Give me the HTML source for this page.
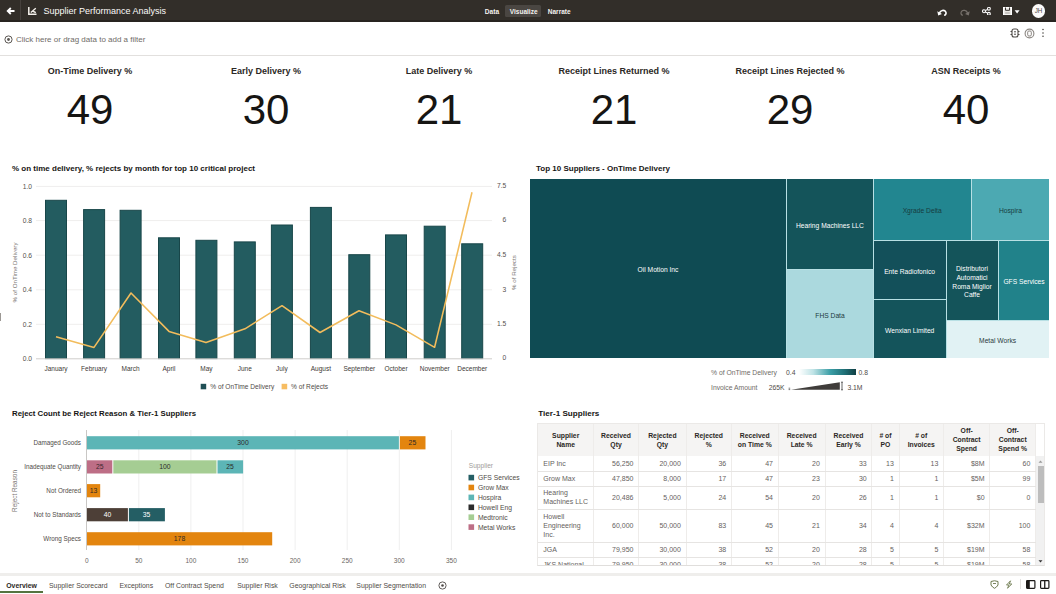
<!DOCTYPE html>
<html><head><meta charset="utf-8">
<style>
*{margin:0;padding:0;box-sizing:border-box}
html,body{width:1056px;height:594px;overflow:hidden;background:#fff;font-family:"Liberation Sans",sans-serif;color:#161513}
.a{position:absolute;white-space:nowrap}
#hdr{position:absolute;left:0;top:0;width:1056px;height:22px;background:#322e29;border-bottom:2px solid #282420}
.kt{position:absolute;top:66px;width:176px;text-align:center;font-size:9px;font-weight:bold;color:#2b2825}
.kv{position:absolute;top:88px;width:176px;text-align:center;font-size:42px;color:#161513;line-height:44px}
.ct{position:absolute;font-size:8px;font-weight:bold;color:#161513}
svg{position:absolute;left:0;top:0}
.tab{position:absolute;font-size:6.9px;color:#4f4b47;line-height:9px}
.tl{width:80px;text-align:center;font-size:6.7px;line-height:10px}
.lg{font-size:6.8px;color:#6f6b67;line-height:10px}
.th{text-align:center;font-size:6.8px;font-weight:bold;color:#2b2825}
.td{font-size:7px;color:#66625e}
</style></head>
<body>
<!-- header -->
<div id="hdr"></div>
<div class="a" style="left:6px;top:5px;width:9px;height:12px">
<svg width="9" height="12" viewBox="0 0 9 12"><path d="M8.5 6H2.2M4.8 3L1.7 6L4.8 9" stroke="#fff" stroke-width="1.8" fill="none"/></svg></div>
<div class="a" style="left:19.5px;top:0;width:1.5px;height:20px;background:#46413d"></div>
<div class="a" style="left:28px;top:7px;width:10px;height:8px">
<svg width="10" height="8" viewBox="0 0 10 8"><path d="M0.8 0V7.2H8.5" stroke="#f4f1ec" stroke-width="1.5" fill="none"/><path d="M2.8 5.5L7.8 1.2M4.6 4L7.8 5.6" stroke="#f4f1ec" stroke-width="1.4" fill="none"/></svg></div>
<div class="a" style="left:43.5px;top:5px;font-size:9px;color:#fcfbfa;line-height:12px">Supplier Performance Analysis</div>
<div class="a" style="left:505.2px;top:4.5px;width:36px;height:12.5px;background:#4a4642;border-radius:1.5px"></div>
<div class="a" style="left:484.8px;top:6.6px;font-size:6.6px;font-weight:bold;color:#f4f2ef;line-height:10px">Data</div>
<div class="a" style="left:509.8px;top:6.6px;font-size:6.5px;font-weight:bold;color:#f4f2ef;line-height:10px">Visualize</div>
<div class="a" style="left:547.8px;top:6.6px;font-size:6.5px;font-weight:bold;color:#f4f2ef;line-height:10px">Narrate</div>
<!-- header right icons -->
<svg style="left:936.5px;top:7.5px" width="10" height="8" viewBox="0 0 10 8"><path d="M2.5 5.2C3 2.2 7.5 1.2 8.8 4C9.5 5.6 8.6 7 7.2 7.4" stroke="#fff" stroke-width="1.6" fill="none"/><path d="M0.3 3.2L1.2 7.6L5 6Z" fill="#fff"/></svg>
<svg style="left:959.5px;top:7.5px" width="10" height="8" viewBox="0 0 10 8"><path d="M7.5 5.2C7 2.2 2.5 1.2 1.2 4C0.5 5.6 1.4 7 2.8 7.4" stroke="#77716c" stroke-width="1.2" fill="none"/><path d="M9.7 3.2L8.8 7.6L5 6Z" fill="#77716c"/></svg>
<svg style="left:981.5px;top:6.8px" width="9" height="8.5" viewBox="0 0 9 8.5"><circle cx="2" cy="4.25" r="1.5" stroke="#fff" stroke-width="1.1" fill="none"/><circle cx="6.9" cy="1.7" r="1.4" stroke="#fff" stroke-width="1.1" fill="none"/><circle cx="6.9" cy="6.8" r="1.4" stroke="#fff" stroke-width="1.1" fill="none"/><path d="M3.3 3.5L5.6 2.4M3.3 5L5.6 6.1" stroke="#fff" stroke-width="1.1"/></svg>
<svg style="left:1002.5px;top:6.8px" width="18" height="8.5" viewBox="0 0 18 8.5"><rect x="0.5" y="0.5" width="8" height="7.5" fill="#eceae6"/><rect x="0.5" y="0.5" width="8" height="7.5" stroke="#fff" stroke-width="1" fill="none"/><path d="M2.5 0.5V3.3H6.5V0.5" stroke="#3a3633" stroke-width="1" fill="none"/><rect x="2.2" y="5" width="4.6" height="2" fill="#c9c6c2"/><path d="M11.6 3.2H16.6L14.1 6.4Z" fill="#fff"/></svg>
<div class="a" style="left:1031.6px;top:3.9px;width:13.8px;height:13.8px;border-radius:50%;background:#fcfbfa;font-size:6.3px;color:#4f4b47;text-align:center;line-height:13.8px">JH</div>
<!-- filter bar -->
<svg style="left:4px;top:35px" width="9" height="9" viewBox="0 0 9 9"><circle cx="4.5" cy="4.5" r="3.6" stroke="#5a5652" stroke-width="1" fill="none"/><circle cx="4.5" cy="4.5" r="1.4" fill="#5a5652"/></svg>
<div class="a" style="left:16px;top:34.5px;font-size:8px;color:#6f6b67;line-height:10px">Click here or drag data to add a filter</div>
<svg style="left:1010px;top:28px" width="10" height="10" viewBox="0 0 10 10"><rect x="2" y="1" width="6" height="8" rx="2" stroke="#4f4b47" stroke-width="1.1" fill="none"/><path d="M0.5 3.5H2M0.5 6.5H2M8 3.5H9.5M8 6.5H9.5M4 3.8H6M4 6.2H6" stroke="#4f4b47" stroke-width="1"/></svg>
<svg style="left:1024px;top:28px" width="11" height="11" viewBox="0 0 11 11"><circle cx="5.5" cy="5.5" r="4.4" stroke="#8a8580" stroke-width="1.1" fill="none"/><rect x="3.7" y="3" width="3.6" height="5" rx="1.2" stroke="#8a8580" stroke-width="1" fill="none"/></svg>
<svg style="left:1041px;top:28px" width="4" height="10" viewBox="0 0 4 10"><circle cx="2" cy="1.5" r="0.8" fill="#4f4b47"/><circle cx="2" cy="5" r="0.8" fill="#4f4b47"/><circle cx="2" cy="8.3" r="0.8" fill="#4f4b47"/></svg>
<div class="a" style="left:0;top:54.6px;width:1056px;height:1.3px;background:#e2e0de"></div>

<!-- KPIs -->
<div class="kt" style="left:2px">On-Time Delivery %</div>
<div class="kt" style="left:178px">Early Delivery %</div>
<div class="kt" style="left:351px">Late Delivery %</div>
<div class="kt" style="left:526px">Receipt Lines Returned %</div>
<div class="kt" style="left:702px">Receipt Lines Rejected %</div>
<div class="kt" style="left:878px">ASN Receipts %</div>
<div class="kv" style="left:2px">49</div>
<div class="kv" style="left:178px">30</div>
<div class="kv" style="left:351px">21</div>
<div class="kv" style="left:526px">21</div>
<div class="kv" style="left:702px">29</div>
<div class="kv" style="left:878px">40</div>

<!-- CHART1 -->
<svg style="left:0;top:150px" width="528" height="250" viewBox="0 150 528 250">
<line x1="36" y1="186.4" x2="492" y2="186.4" stroke="#efeeed" stroke-width="1"/>
<line x1="36" y1="220.6" x2="492" y2="220.6" stroke="#efeeed" stroke-width="1"/>
<line x1="36" y1="255.2" x2="492" y2="255.2" stroke="#efeeed" stroke-width="1"/>
<line x1="36" y1="289.8" x2="492" y2="289.8" stroke="#efeeed" stroke-width="1"/>
<line x1="36" y1="324.3" x2="492" y2="324.3" stroke="#efeeed" stroke-width="1"/>
<rect x="45.5" y="200.3" width="21" height="158.3" fill="#235c60" stroke="#184649" stroke-width="1"/>
<rect x="83.6" y="209.6" width="21" height="149.0" fill="#235c60" stroke="#184649" stroke-width="1"/>
<rect x="120.1" y="210.3" width="21" height="148.3" fill="#235c60" stroke="#184649" stroke-width="1"/>
<rect x="158.5" y="237.8" width="21" height="120.8" fill="#235c60" stroke="#184649" stroke-width="1"/>
<rect x="195.9" y="240.3" width="21" height="118.3" fill="#235c60" stroke="#184649" stroke-width="1"/>
<rect x="234.3" y="241.9" width="21" height="116.7" fill="#235c60" stroke="#184649" stroke-width="1"/>
<rect x="271.4" y="225.0" width="21" height="133.6" fill="#235c60" stroke="#184649" stroke-width="1"/>
<rect x="310.4" y="207.4" width="21" height="151.2" fill="#235c60" stroke="#184649" stroke-width="1"/>
<rect x="348.8" y="254.7" width="21" height="103.9" fill="#235c60" stroke="#184649" stroke-width="1"/>
<rect x="385.5" y="234.9" width="21" height="123.7" fill="#235c60" stroke="#184649" stroke-width="1"/>
<rect x="424.2" y="226.2" width="21" height="132.4" fill="#235c60" stroke="#184649" stroke-width="1"/>
<rect x="461.7" y="243.8" width="21" height="114.8" fill="#235c60" stroke="#184649" stroke-width="1"/>
<line x1="36" y1="358.8" x2="492" y2="358.8" stroke="#cfcdcb" stroke-width="1"/>
<polyline points="56,336.8 94,347.4 131,293 169,331.4 206,342.6 245,328.8 282,305.7 320,332.5 359,310.8 396,324.9 434.6,347.3 472,192.2" fill="none" stroke="#f2bc5c" stroke-width="1.55" stroke-linejoin="round"/>
<text x="32" y="188.7" text-anchor="end" font-size="6.7" fill="#55514d">1.0</text>
<text x="32" y="222.9" text-anchor="end" font-size="6.7" fill="#55514d">0.8</text>
<text x="32" y="257.5" text-anchor="end" font-size="6.7" fill="#55514d">0.6</text>
<text x="32" y="292.1" text-anchor="end" font-size="6.7" fill="#55514d">0.4</text>
<text x="32" y="326.6" text-anchor="end" font-size="6.7" fill="#55514d">0.2</text>
<text x="32" y="360.9" text-anchor="end" font-size="6.7" fill="#55514d">0.0</text>
<text x="506.3" y="188.1" text-anchor="end" font-size="6.7" fill="#55514d">7.5</text>
<text x="506.3" y="222.3" text-anchor="end" font-size="6.7" fill="#55514d">6</text>
<text x="506.3" y="256.9" text-anchor="end" font-size="6.7" fill="#55514d">4.5</text>
<text x="506.3" y="291.5" text-anchor="end" font-size="6.7" fill="#55514d">3</text>
<text x="506.3" y="326.0" text-anchor="end" font-size="6.7" fill="#55514d">1.5</text>
<text x="506.3" y="360.3" text-anchor="end" font-size="6.7" fill="#55514d">0</text>
<text x="56.0" y="371" text-anchor="middle" font-size="6.5" fill="#3d3935">January</text>
<text x="94.1" y="371" text-anchor="middle" font-size="6.5" fill="#3d3935">February</text>
<text x="130.6" y="371" text-anchor="middle" font-size="6.5" fill="#3d3935">March</text>
<text x="169.0" y="371" text-anchor="middle" font-size="6.5" fill="#3d3935">April</text>
<text x="206.4" y="371" text-anchor="middle" font-size="6.5" fill="#3d3935">May</text>
<text x="244.8" y="371" text-anchor="middle" font-size="6.5" fill="#3d3935">June</text>
<text x="281.9" y="371" text-anchor="middle" font-size="6.5" fill="#3d3935">July</text>
<text x="320.9" y="371" text-anchor="middle" font-size="6.5" fill="#3d3935">August</text>
<text x="359.3" y="371" text-anchor="middle" font-size="6.5" fill="#3d3935">September</text>
<text x="396.0" y="371" text-anchor="middle" font-size="6.5" fill="#3d3935">October</text>
<text x="434.7" y="371" text-anchor="middle" font-size="6.5" fill="#3d3935">November</text>
<text x="472.2" y="371" text-anchor="middle" font-size="6.5" fill="#3d3935">December</text>
<text transform="translate(17.3,272.5) rotate(-90)" text-anchor="middle" font-size="6.2" fill="#7a7571">% of OnTime Delivery</text>
<text transform="translate(515.5,272.6) rotate(-90)" text-anchor="middle" font-size="6.2" fill="#7a7571">% of Rejects</text>
<rect x="200.7" y="383.8" width="5.5" height="5.5" fill="#1f4f55"/>
<text x="210.3" y="389" font-size="6.6" fill="#4f4b47">% of OnTime Delivery</text>
<rect x="281.6" y="383.8" width="5.6" height="5.5" fill="#f7bd62"/>
<text x="291.1" y="389" font-size="6.6" fill="#4f4b47">% of Rejects</text>
</svg>
<div class="ct" style="left:12px;top:163.5px;line-height:10px">% on time delivery, % rejects by month for top 10 critical project</div>
<div class="a" style="left:0;top:312.5px;width:1.3px;height:8.5px;background:#9c9894"></div>
<!-- TREEMAP -->
<div class="a" style="left:530px;top:179px;width:519px;height:179px;background:#b8e0e4"></div>
<div class="a" style="left:530px;top:179px;width:256.0px;height:179.0px;background:#0f4b53"></div>
<div class="a tl" style="left:618.0px;top:264.9px;color:#ffffff">Oil Motion Inc</div>
<div class="a" style="left:787px;top:179px;width:86.0px;height:90.0px;background:#14545a"></div>
<div class="a tl" style="left:789.9px;top:220.5px;color:#ffffff">Hearing Machines LLC</div>
<div class="a" style="left:787px;top:270px;width:86.0px;height:88.0px;background:#abd9de"></div>
<div class="a tl" style="left:790.0px;top:310.5px;color:#1d3b3e">FHS Data</div>
<div class="a" style="left:874px;top:179px;width:97.0px;height:61.0px;background:#228690"></div>
<div class="a tl" style="left:882.2px;top:206.0px;color:#173c40">Xgrade Delta</div>
<div class="a" style="left:972px;top:179px;width:77.0px;height:61.0px;background:#4ca9b2"></div>
<div class="a tl" style="left:970.5px;top:206.0px;color:#173c40">Hospira</div>
<div class="a" style="left:874px;top:241px;width:72.0px;height:58.0px;background:#13505a"></div>
<div class="a tl" style="left:869.6px;top:266.7px;color:#ffffff">Ente Radiofonico</div>
<div class="a" style="left:874px;top:300px;width:72.0px;height:58.0px;background:#14545b"></div>
<div class="a tl" style="left:869.7px;top:325.6px;color:#ffffff">Wenxian Limited</div>
<div class="a" style="left:947px;top:241px;width:51.0px;height:79.0px;background:#14545a"></div>
<div class="a tl" style="left:932.0px;top:264.0px;color:#ffffff">Distributori</div>
<div class="a tl" style="left:932.0px;top:272.8px;color:#ffffff">Automatici</div>
<div class="a tl" style="left:932.0px;top:281.6px;color:#ffffff">Roma Miglior</div>
<div class="a tl" style="left:932.0px;top:290.3px;color:#ffffff">Caffe</div>
<div class="a" style="left:999px;top:241px;width:50.0px;height:79.0px;background:#21828a"></div>
<div class="a tl" style="left:984.0px;top:276.7px;color:#ffffff">GFS Services</div>
<div class="a" style="left:947px;top:321px;width:102.0px;height:37.0px;background:#e1f2f4"></div>
<div class="a tl" style="left:957.6px;top:336.4px;color:#2b3a3c">Metal Works</div>
<div class="ct" style="left:536px;top:163.6px;line-height:10px">Top 10 Suppliers - OnTime Delivery</div>
<div class="a lg" style="left:711px;top:367.5px">% of OnTime Delivery</div>
<div class="a lg" style="left:786px;top:367.5px;color:#4f4b47">0.4</div>
<div class="a" style="left:799px;top:369.4px;width:56.5px;height:5.2px;background:linear-gradient(90deg,#ffffff 0%,#bfe3e6 25%,#3b9ea6 55%,#1f6f76 80%,#103f44 100%)"></div>
<div class="a lg" style="left:858.5px;top:367.5px;color:#4f4b47">0.8</div>
<div class="a lg" style="left:711px;top:382.5px">Invoice Amount</div>
<div class="a lg" style="left:768.7px;top:382.5px;color:#4f4b47">265K</div>
<svg style="left:786px;top:380px" width="60" height="12" viewBox="0 0 60 12"><path d="M2.6 8.2H4.2M2.6 9.6H4.2" stroke="#555" stroke-width="0.8"/><path d="M5 9.8L53.8 2.2V9.8Z" fill="#3f3c3a"/><path d="M56 2.2V9.8M55 2.2H57M55 9.8H57" stroke="#555" stroke-width="0.9"/></svg>
<div class="a lg" style="left:847.4px;top:382.5px;color:#4f4b47">3.1M</div>
<!-- BARCHART -->
<svg style="left:0;top:420px" width="528" height="155" viewBox="0 420 528 155">
<line x1="138.8" y1="430" x2="138.8" y2="550" stroke="#efefef" stroke-width="1"/>
<line x1="190.9" y1="430" x2="190.9" y2="550" stroke="#efefef" stroke-width="1"/>
<line x1="243.0" y1="430" x2="243.0" y2="550" stroke="#efefef" stroke-width="1"/>
<line x1="295.1" y1="430" x2="295.1" y2="550" stroke="#efefef" stroke-width="1"/>
<line x1="347.2" y1="430" x2="347.2" y2="550" stroke="#efefef" stroke-width="1"/>
<line x1="399.3" y1="430" x2="399.3" y2="550" stroke="#efefef" stroke-width="1"/>
<line x1="451.4" y1="430" x2="451.4" y2="550" stroke="#efefef" stroke-width="1"/>
<rect x="86.9" y="436.2" width="312.0" height="13.2" fill="#5cb5b6"/>
<text x="243.0" y="445.2" text-anchor="middle" font-size="6.8" fill="#2d2a27">300</text>
<rect x="399.9" y="436.2" width="25.6" height="13.2" fill="#e3850f"/>
<text x="412.4" y="445.2" text-anchor="middle" font-size="6.8" fill="#2d2a27">25</text>
<text x="81" y="444.9" text-anchor="end" font-size="6.3" fill="#4f4b47">Damaged Goods</text>
<rect x="86.9" y="460.3" width="25.4" height="13.2" fill="#bd6e86"/>
<text x="99.7" y="469.3" text-anchor="middle" font-size="6.8" fill="#3b2730">25</text>
<rect x="113.3" y="460.3" width="103.2" height="13.2" fill="#a5cd93"/>
<text x="164.9" y="469.3" text-anchor="middle" font-size="6.8" fill="#2d2a27">100</text>
<rect x="217.5" y="460.3" width="25.6" height="13.2" fill="#5cb5b6"/>
<text x="230.0" y="469.3" text-anchor="middle" font-size="6.8" fill="#2d2a27">25</text>
<text x="81" y="469.0" text-anchor="end" font-size="6.3" fill="#4f4b47">Inadequate Quantity</text>
<rect x="86.9" y="484.1" width="13.3" height="13.2" fill="#e3850f"/>
<text x="93.5" y="493.1" text-anchor="middle" font-size="6.8" fill="#2d2a27">13</text>
<text x="81" y="492.8" text-anchor="end" font-size="6.3" fill="#4f4b47">Not Ordered</text>
<rect x="86.9" y="508.1" width="41.0" height="13.2" fill="#4d3f37"/>
<text x="107.5" y="517.1" text-anchor="middle" font-size="6.8" fill="#ffffff">40</text>
<rect x="128.9" y="508.1" width="36.0" height="13.2" fill="#245e64"/>
<text x="146.6" y="517.1" text-anchor="middle" font-size="6.8" fill="#ffffff">35</text>
<text x="81" y="516.8" text-anchor="end" font-size="6.3" fill="#4f4b47">Not to Standards</text>
<rect x="86.9" y="532.2" width="185.3" height="13.2" fill="#e3850f"/>
<text x="179.5" y="541.2" text-anchor="middle" font-size="6.8" fill="#2d2a27">178</text>
<text x="81" y="540.9" text-anchor="end" font-size="6.3" fill="#4f4b47">Wrong Specs</text>
<line x1="86.5" y1="430" x2="86.5" y2="550" stroke="#c9c7c5" stroke-width="1"/>
<text x="86.7" y="563" text-anchor="middle" font-size="6.5" fill="#6a6662">0</text>
<text x="138.8" y="563" text-anchor="middle" font-size="6.5" fill="#6a6662">50</text>
<text x="190.9" y="563" text-anchor="middle" font-size="6.5" fill="#6a6662">100</text>
<text x="243.0" y="563" text-anchor="middle" font-size="6.5" fill="#6a6662">150</text>
<text x="295.1" y="563" text-anchor="middle" font-size="6.5" fill="#6a6662">200</text>
<text x="347.2" y="563" text-anchor="middle" font-size="6.5" fill="#6a6662">250</text>
<text x="399.3" y="563" text-anchor="middle" font-size="6.5" fill="#6a6662">300</text>
<text x="451.4" y="563" text-anchor="middle" font-size="6.5" fill="#6a6662">350</text>
<text transform="translate(16.5,491) rotate(-90)" text-anchor="middle" font-size="6.4" fill="#7a7571">Reject Reason</text>
<text x="468.8" y="467.5" font-size="6.6" fill="#a09c98">Supplier</text>
<rect x="468.5" y="474.8" width="5.6" height="5.6" fill="#245e64"/>
<text x="477.9" y="480.1" font-size="6.75" fill="#4f4b47">GFS Services</text>
<rect x="468.5" y="484.7" width="5.6" height="5.6" fill="#e3850f"/>
<text x="477.9" y="490.0" font-size="6.75" fill="#4f4b47">Grow Max</text>
<rect x="468.5" y="494.6" width="5.6" height="5.6" fill="#5cb5b6"/>
<text x="477.9" y="499.9" font-size="6.75" fill="#4f4b47">Hospira</text>
<rect x="468.5" y="504.5" width="5.6" height="5.6" fill="#2b2b2b"/>
<text x="477.9" y="509.8" font-size="6.75" fill="#4f4b47">Howell Eng</text>
<rect x="468.5" y="514.4" width="5.6" height="5.6" fill="#a5cd93"/>
<text x="477.9" y="519.7" font-size="6.75" fill="#4f4b47">Medtronic</text>
<rect x="468.5" y="524.3" width="5.6" height="5.6" fill="#bd6e86"/>
<text x="477.9" y="529.6" font-size="6.75" fill="#4f4b47">Metal Works</text>
</svg>
<div class="ct" style="left:12px;top:408.8px;line-height:10px;font-size:7.8px">Reject Count be Reject Reason &amp; Tier-1 Suppliers</div>
<!-- TABLE -->
<div class="ct" style="left:538.3px;top:409px;line-height:10px;font-size:8.1px">Tier-1 Suppliers</div>
<div class="a" style="left:537px;top:422.5px;width:508px;height:143px;overflow:hidden;border:1px solid #ebe9e7;border-bottom:1px solid #e0dedc">
<div class="a" style="left:0;top:0;width:497.6px;height:32.5px;background:#f5f4f3"></div>
<div class="a th" style="left:0.0px;top:8.4px;width:55.4px;line-height:8.9px">Supplier<br>Name</div>
<div class="a th" style="left:55.4px;top:8.4px;width:45.3px;line-height:8.9px">Received<br>Qty</div>
<div class="a th" style="left:100.7px;top:8.4px;width:47.4px;line-height:8.9px">Rejected<br>Qty</div>
<div class="a th" style="left:148.1px;top:8.4px;width:45.3px;line-height:8.9px">Rejected<br>%</div>
<div class="a th" style="left:193.4px;top:8.4px;width:46.8px;line-height:8.9px">Received<br>on Time %</div>
<div class="a th" style="left:240.2px;top:8.4px;width:46.9px;line-height:8.9px">Received<br>Late %</div>
<div class="a th" style="left:287.1px;top:8.4px;width:46.8px;line-height:8.9px">Received<br>Early %</div>
<div class="a th" style="left:333.9px;top:8.4px;width:27.1px;line-height:8.9px"># of<br>PO</div>
<div class="a th" style="left:361.0px;top:8.4px;width:44.5px;line-height:8.9px"># of<br>Invoices</div>
<div class="a th" style="left:405.5px;top:3.9px;width:46.3px;line-height:8.9px">Off-<br>Contract<br>Spend</div>
<div class="a th" style="left:451.8px;top:3.9px;width:45.8px;line-height:8.9px">Off-<br>Contract<br>Spend %</div>
<div class="a" style="left:54.9px;top:0;width:1px;height:143px;background:#eeecea"></div>
<div class="a" style="left:100.2px;top:0;width:1px;height:143px;background:#eeecea"></div>
<div class="a" style="left:147.6px;top:0;width:1px;height:143px;background:#eeecea"></div>
<div class="a" style="left:192.9px;top:0;width:1px;height:143px;background:#eeecea"></div>
<div class="a" style="left:239.7px;top:0;width:1px;height:143px;background:#eeecea"></div>
<div class="a" style="left:286.6px;top:0;width:1px;height:143px;background:#eeecea"></div>
<div class="a" style="left:333.4px;top:0;width:1px;height:143px;background:#eeecea"></div>
<div class="a" style="left:360.5px;top:0;width:1px;height:143px;background:#eeecea"></div>
<div class="a" style="left:405.0px;top:0;width:1px;height:143px;background:#eeecea"></div>
<div class="a" style="left:451.3px;top:0;width:1px;height:143px;background:#eeecea"></div>
<div class="a" style="left:497.1px;top:0;width:1px;height:143px;background:#eeecea"></div>
<div class="a" style="left:0;top:47.5px;width:497.6px;height:1px;background:#e6e4e2"></div>
<div class="a td" style="left:5.3px;top:35.2px;line-height:9px">EIP Inc</div>
<div class="a td" style="left:55.4px;width:40.1px;text-align:right;top:35.2px;line-height:9px">56,250</div>
<div class="a td" style="left:100.7px;width:42.2px;text-align:right;top:35.2px;line-height:9px">20,000</div>
<div class="a td" style="left:148.1px;width:40.1px;text-align:right;top:35.2px;line-height:9px">36</div>
<div class="a td" style="left:193.4px;width:41.6px;text-align:right;top:35.2px;line-height:9px">47</div>
<div class="a td" style="left:240.2px;width:41.7px;text-align:right;top:35.2px;line-height:9px">20</div>
<div class="a td" style="left:287.1px;width:41.6px;text-align:right;top:35.2px;line-height:9px">33</div>
<div class="a td" style="left:333.9px;width:21.9px;text-align:right;top:35.2px;line-height:9px">13</div>
<div class="a td" style="left:361.0px;width:39.3px;text-align:right;top:35.2px;line-height:9px">13</div>
<div class="a td" style="left:405.5px;width:41.1px;text-align:right;top:35.2px;line-height:9px">$8M</div>
<div class="a td" style="left:451.8px;width:40.6px;text-align:right;top:35.2px;line-height:9px">60</div>
<div class="a" style="left:0;top:62.5px;width:497.6px;height:1px;background:#e6e4e2"></div>
<div class="a td" style="left:5.3px;top:50.2px;line-height:9px">Grow Max</div>
<div class="a td" style="left:55.4px;width:40.1px;text-align:right;top:50.2px;line-height:9px">47,850</div>
<div class="a td" style="left:100.7px;width:42.2px;text-align:right;top:50.2px;line-height:9px">8,000</div>
<div class="a td" style="left:148.1px;width:40.1px;text-align:right;top:50.2px;line-height:9px">17</div>
<div class="a td" style="left:193.4px;width:41.6px;text-align:right;top:50.2px;line-height:9px">47</div>
<div class="a td" style="left:240.2px;width:41.7px;text-align:right;top:50.2px;line-height:9px">23</div>
<div class="a td" style="left:287.1px;width:41.6px;text-align:right;top:50.2px;line-height:9px">30</div>
<div class="a td" style="left:333.9px;width:21.9px;text-align:right;top:50.2px;line-height:9px">1</div>
<div class="a td" style="left:361.0px;width:39.3px;text-align:right;top:50.2px;line-height:9px">1</div>
<div class="a td" style="left:405.5px;width:41.1px;text-align:right;top:50.2px;line-height:9px">$5M</div>
<div class="a td" style="left:451.8px;width:40.6px;text-align:right;top:50.2px;line-height:9px">99</div>
<div class="a" style="left:0;top:85.5px;width:497.6px;height:1px;background:#e6e4e2"></div>
<div class="a td" style="left:5.3px;top:64.7px;line-height:9px">Hearing<br>Machines LLC</div>
<div class="a td" style="left:55.4px;width:40.1px;text-align:right;top:69.2px;line-height:9px">20,486</div>
<div class="a td" style="left:100.7px;width:42.2px;text-align:right;top:69.2px;line-height:9px">5,000</div>
<div class="a td" style="left:148.1px;width:40.1px;text-align:right;top:69.2px;line-height:9px">24</div>
<div class="a td" style="left:193.4px;width:41.6px;text-align:right;top:69.2px;line-height:9px">54</div>
<div class="a td" style="left:240.2px;width:41.7px;text-align:right;top:69.2px;line-height:9px">20</div>
<div class="a td" style="left:287.1px;width:41.6px;text-align:right;top:69.2px;line-height:9px">26</div>
<div class="a td" style="left:333.9px;width:21.9px;text-align:right;top:69.2px;line-height:9px">1</div>
<div class="a td" style="left:361.0px;width:39.3px;text-align:right;top:69.2px;line-height:9px">1</div>
<div class="a td" style="left:405.5px;width:41.1px;text-align:right;top:69.2px;line-height:9px">$0</div>
<div class="a td" style="left:451.8px;width:40.6px;text-align:right;top:69.2px;line-height:9px">0</div>
<div class="a" style="left:0;top:118.3px;width:497.6px;height:1px;background:#e6e4e2"></div>
<div class="a td" style="left:5.3px;top:88.1px;line-height:9px">Howell<br>Engineering<br>Inc.</div>
<div class="a td" style="left:55.4px;width:40.1px;text-align:right;top:97.1px;line-height:9px">60,000</div>
<div class="a td" style="left:100.7px;width:42.2px;text-align:right;top:97.1px;line-height:9px">50,000</div>
<div class="a td" style="left:148.1px;width:40.1px;text-align:right;top:97.1px;line-height:9px">83</div>
<div class="a td" style="left:193.4px;width:41.6px;text-align:right;top:97.1px;line-height:9px">45</div>
<div class="a td" style="left:240.2px;width:41.7px;text-align:right;top:97.1px;line-height:9px">21</div>
<div class="a td" style="left:287.1px;width:41.6px;text-align:right;top:97.1px;line-height:9px">34</div>
<div class="a td" style="left:333.9px;width:21.9px;text-align:right;top:97.1px;line-height:9px">4</div>
<div class="a td" style="left:361.0px;width:39.3px;text-align:right;top:97.1px;line-height:9px">4</div>
<div class="a td" style="left:405.5px;width:41.1px;text-align:right;top:97.1px;line-height:9px">$32M</div>
<div class="a td" style="left:451.8px;width:40.6px;text-align:right;top:97.1px;line-height:9px">100</div>
<div class="a" style="left:0;top:133.4px;width:497.6px;height:1px;background:#e6e4e2"></div>
<div class="a td" style="left:5.3px;top:121.0px;line-height:9px">JGA</div>
<div class="a td" style="left:55.4px;width:40.1px;text-align:right;top:121.0px;line-height:9px">79,950</div>
<div class="a td" style="left:100.7px;width:42.2px;text-align:right;top:121.0px;line-height:9px">30,000</div>
<div class="a td" style="left:148.1px;width:40.1px;text-align:right;top:121.0px;line-height:9px">38</div>
<div class="a td" style="left:193.4px;width:41.6px;text-align:right;top:121.0px;line-height:9px">52</div>
<div class="a td" style="left:240.2px;width:41.7px;text-align:right;top:121.0px;line-height:9px">20</div>
<div class="a td" style="left:287.1px;width:41.6px;text-align:right;top:121.0px;line-height:9px">28</div>
<div class="a td" style="left:333.9px;width:21.9px;text-align:right;top:121.0px;line-height:9px">5</div>
<div class="a td" style="left:361.0px;width:39.3px;text-align:right;top:121.0px;line-height:9px">5</div>
<div class="a td" style="left:405.5px;width:41.1px;text-align:right;top:121.0px;line-height:9px">$19M</div>
<div class="a td" style="left:451.8px;width:40.6px;text-align:right;top:121.0px;line-height:9px">58</div>
<div class="a" style="left:0;top:148.5px;width:497.6px;height:1px;background:#e6e4e2"></div>
<div class="a td" style="left:5.3px;top:136.2px;line-height:9px">JKS National</div>
<div class="a td" style="left:55.4px;width:40.1px;text-align:right;top:136.2px;line-height:9px">79,950</div>
<div class="a td" style="left:100.7px;width:42.2px;text-align:right;top:136.2px;line-height:9px">30,000</div>
<div class="a td" style="left:148.1px;width:40.1px;text-align:right;top:136.2px;line-height:9px">38</div>
<div class="a td" style="left:193.4px;width:41.6px;text-align:right;top:136.2px;line-height:9px">52</div>
<div class="a td" style="left:240.2px;width:41.7px;text-align:right;top:136.2px;line-height:9px">20</div>
<div class="a td" style="left:287.1px;width:41.6px;text-align:right;top:136.2px;line-height:9px">28</div>
<div class="a td" style="left:333.9px;width:21.9px;text-align:right;top:136.2px;line-height:9px">5</div>
<div class="a td" style="left:361.0px;width:39.3px;text-align:right;top:136.2px;line-height:9px">5</div>
<div class="a td" style="left:405.5px;width:41.1px;text-align:right;top:136.2px;line-height:9px">$19M</div>
<div class="a td" style="left:451.8px;width:40.6px;text-align:right;top:136.2px;line-height:9px">58</div>
<div class="a" style="left:497.6px;top:0;width:9.5px;height:32.5px;background:#fff"></div>
<div class="a" style="left:498.1px;top:32.5px;width:9px;height:111px;background:#f1f1f1"></div>
<div class="a" style="left:499.8px;top:42.9px;width:6.2px;height:37px;background:#bdbdbd"></div>
<svg style="left:500.4px;top:36.0px" width="5" height="3" viewBox="0 0 5 3"><path d="M0.5 2.7L2.5 0.5L4.5 2.7Z" fill="#9a9a9a"/></svg>
<svg style="left:500.4px;top:136.0px" width="5" height="3" viewBox="0 0 5 3"><path d="M0.5 0.3L2.5 2.5L4.5 0.3Z" fill="#333"/></svg>
</div>
<!-- TABS -->
<div class="a" style="left:0;top:573.3px;width:1056px;height:2.6px;background:#efeeec"></div>
<div class="a tab" style="left:6.2px;top:580.5px;font-weight:bold;color:#2b2825">Overview</div>
<div class="a" style="left:0;top:591px;width:43px;height:2px;background:#55733f"></div>
<div class="a tab" style="left:49px;top:580.5px">Supplier Scorecard</div>
<div class="a tab" style="left:119.4px;top:580.5px">Exceptions</div>
<div class="a tab" style="left:165px;top:580.5px">Off Contract Spend</div>
<div class="a tab" style="left:237.2px;top:580.5px">Supplier Risk</div>
<div class="a tab" style="left:289.3px;top:580.5px">Geographical Risk</div>
<div class="a tab" style="left:356.3px;top:580.5px">Supplier Segmentation</div>
<svg style="left:437.5px;top:580.5px" width="9" height="9" viewBox="0 0 9 9"><circle cx="4.5" cy="4.5" r="3.6" stroke="#4f4b47" stroke-width="0.9" fill="none"/><circle cx="4.5" cy="4.5" r="1.3" fill="#4f4b47"/></svg>
<svg style="left:990px;top:579.5px" width="9" height="9" viewBox="0 0 9 9"><path d="M1 1.5Q4.5 0 8 1.5V5Q6.5 7.5 4.5 8.3Q2.5 7.5 1 5Z" stroke="#6d7a4f" stroke-width="1" fill="none"/><path d="M3 3.5H6" stroke="#6d7a4f" stroke-width="0.9"/></svg>
<svg style="left:1005px;top:579.5px" width="8" height="9" viewBox="0 0 8 9"><path d="M5.5 0.8L1.5 5H4L2.5 8.2L6.8 4H4.3Z" stroke="#6d7a4f" stroke-width="0.9" fill="none"/></svg>
<div class="a" style="left:1019.5px;top:579px;width:1px;height:10px;background:#e2e0de"></div>
<svg style="left:1026px;top:579.5px" width="9.5" height="9" viewBox="0 0 9.5 9"><rect x="0.6" y="0.6" width="8.3" height="7.8" rx="0.8" stroke="#1c1a18" stroke-width="1.2" fill="#fff"/><rect x="0.6" y="0.6" width="3.2" height="7.8" fill="#1c1a18"/></svg>
<svg style="left:1040px;top:579.5px" width="9.5" height="9" viewBox="0 0 9.5 9"><rect x="0.6" y="0.6" width="8.3" height="7.8" rx="0.8" stroke="#1c1a18" stroke-width="1.2" fill="#fff"/><path d="M4.75 0.6V8.4" stroke="#1c1a18" stroke-width="1.3"/></svg>

</body></html>
